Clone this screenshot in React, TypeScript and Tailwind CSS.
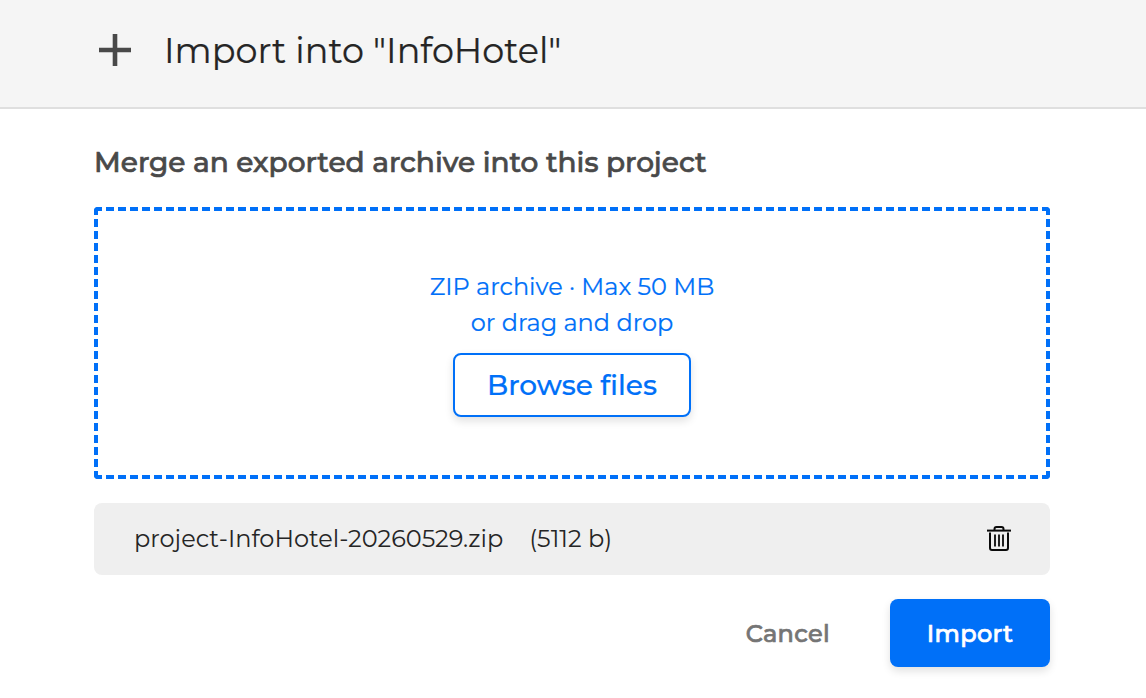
import { useState } from 'react'

type ArchiveFile = { name: string; size: number }

const INITIAL_FILE: ArchiveFile = { name: 'project-InfoHotel-20260529.zip', size: 5112 }

function PlusIcon() {
  return (
    <svg width="32" height="32" viewBox="0 0 32 32" fill="none" stroke="#494949" strokeWidth="4.6">
      <path d="M16 0v32M0 16h32" />
    </svg>
  )
}

function TrashIcon() {
  return (
    <svg width="24" height="26" viewBox="0 0 24 26" fill="none" stroke="#0a0a0a" strokeWidth="2">
      <path d="M0 4.6h24" />
      <path d="M7.5 4.5V3Q7.5 1 9.5 1h5Q16.5 1 16.5 3v1.5" />
      <path d="M3 6.5V22q0 2 2 2h14q2 0 2-2V6.5" />
      <path d="M8 8.5v12M12 8.5v12M16 8.5v12" strokeWidth="1.8" />
    </svg>
  )
}

export default function App() {
  const [file, setFile] = useState<ArchiveFile | null>(INITIAL_FILE)

  return (
    <div className="h-[698px] w-[1146px] overflow-hidden bg-white font-[Montserrat,Inter,sans-serif] text-[#252525]">
      <header className="flex h-[109px] items-center border-b-2 border-[#dfdfdf] bg-[#f5f5f5] pb-[7px] pl-[99px]">
        <PlusIcon />
        <h1 className="ml-[33px] pt-[2px] text-[35px] leading-[44px] font-normal whitespace-nowrap [-webkit-text-stroke:0.2px_#252525]">
          Import into "InfoHotel"
        </h1>
      </header>

      <main className="pt-[35px] pr-[96px] pl-[94px]">
        <h2 className="text-[28px] leading-[36px] font-medium whitespace-nowrap text-[#494949] [-webkit-text-stroke:0.7px_#494949]">
          Merge an exported archive into this project
        </h2>

        {/* drop zone */}
        <div className="mt-[27px] flex h-[272px] flex-col items-center rounded-[4px] border-4 border-dashed border-[#0070f8] pt-[58px] text-[#0070f8] [-webkit-text-stroke:0.2px_#0070f8]">
          <p className="text-center text-[24px] leading-[36px] whitespace-nowrap">
            <span>ZIP archive · Max 50 MB</span>
            <br />
            <span>or drag and drop</span>
          </p>
          <button className="mt-3 h-16 w-[238px] rounded-lg border-2 border-[#0070f8] bg-white text-[28px] font-medium whitespace-nowrap shadow-[0_4px_8px_rgba(0,0,0,0.12)]">
            Browse files
          </button>
        </div>

        {/* selected file */}
        {file && (
          <div className="mt-6 flex h-[72px] items-center rounded-lg bg-[#efefef] pr-[39px] pl-10 text-[24px] whitespace-nowrap">
            <span>{file.name}</span>
            <span className="ml-[26px]">({file.size} b)</span>
            <button className="ml-auto" aria-label="Remove file" onClick={() => setFile(null)}>
              <TrashIcon />
            </button>
          </div>
        )}

        <div className="mt-6 flex items-center justify-end gap-[60px] text-[24px] font-medium tracking-[0.3px]">
          <button className="pt-[2px] text-[#757575] [-webkit-text-stroke:0.7px_#757575]">Cancel</button>
          <button className="h-[68px] w-40 rounded-lg bg-[#0070f8] pt-[2px] text-white shadow-[0_4px_8px_rgba(0,0,0,0.12)] [-webkit-text-stroke:0.7px_#fff]">
            Import
          </button>
        </div>
      </main>
    </div>
  )
}
